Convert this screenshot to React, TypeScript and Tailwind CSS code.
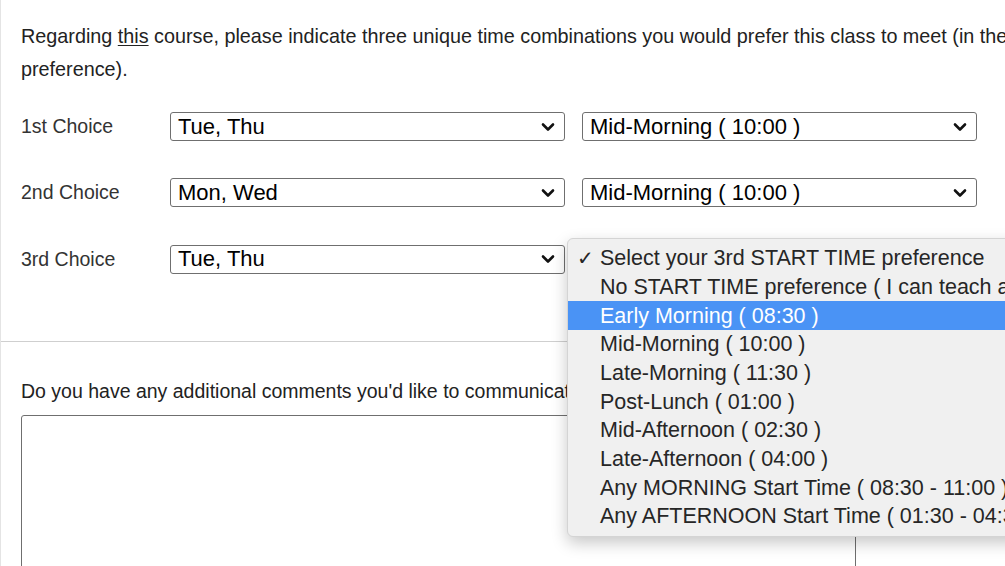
import React from "react";

const ROWS = [
  { label: "1st Choice", days: "Tue, Thu", time: "Mid-Morning ( 10:00 )" },
  { label: "2nd Choice", days: "Mon, Wed", time: "Mid-Morning ( 10:00 )" },
  { label: "3rd Choice", days: "Tue, Thu", time: "" },
];

const OPTIONS = [
  "Select your 3rd START TIME preference",
  "No START TIME preference ( I can teach any time )",
  "Early Morning ( 08:30 )",
  "Mid-Morning ( 10:00 )",
  "Late-Morning ( 11:30 )",
  "Post-Lunch ( 01:00 )",
  "Mid-Afternoon ( 02:30 )",
  "Late-Afternoon ( 04:00 )",
  "Any MORNING Start Time ( 08:30 - 11:00 )",
  "Any AFTERNOON Start Time ( 01:30 - 04:30 )",
];

function Chevron() {
  return (
    <svg viewBox="0 0 14 10" className="h-[10px] w-[14px] shrink-0">
      <path d="M2 2.5 L7 7.5 L12 2.5" fill="none" stroke="#111" strokeWidth="2.6" strokeLinecap="round" strokeLinejoin="round" />
    </svg>
  );
}

function FakeSelect({ value }: { value: string }) {
  return (
    <div className="w-[395px] h-[29px] border border-[#6f6f6f] rounded-[3px] bg-white flex items-center justify-between pl-[7px] pr-[9px]">
      <span className="text-[22px] text-black leading-none">{value}</span>
      <Chevron />
    </div>
  );
}

export default function App() {
  return (
    <div className="relative w-[1005px] h-[566px] overflow-hidden bg-white font-['Liberation_Sans',Arial,sans-serif] border-l border-[#e4e4e4]">
      <div className="w-[1200px]">
        {/* Question */}
        <div className="pl-[20px] pt-[20px] text-[19.8px] leading-[33px] text-[#222]">
          <p className="w-[1100px] whitespace-nowrap">
            Regarding <span className="underline underline-offset-2">this</span> course, please indicate three unique time combinations you would prefer this class to meet (in the order of your preference).
          </p>
          <p>preference).</p>
        </div>

        {/* Choices */}
        <div className="pl-[20px] pt-[26px] flex flex-col gap-[37px]">
          {ROWS.map((row) => (
            <div key={row.label} className="flex items-center">
              <span className="w-[149px] text-[19.5px] text-[#333]">{row.label}</span>
              <FakeSelect value={row.days} />
              {row.time && (
                <div className="ml-[17px]">
                  <FakeSelect value={row.time} />
                </div>
              )}
            </div>
          ))}
        </div>

        <div className="mt-[67px] h-px bg-[#cfcfcf] w-full" />

        {/* Comments */}
        <div className="pl-[20px] pt-[36px]">
          <p className="text-[19.5px] text-[#222] leading-[26px]">
            Do you have any additional comments you'd like to communicate?
          </p>
          <div className="mt-[11px] w-[835px] h-[200px] border border-[#6f6f6f] rounded-[3px] bg-white" />
        </div>
      </div>

      {/* Open dropdown menu */}
      <div className="absolute left-[566px] top-[238px] w-[520px] py-[5px] bg-[#f0f0f0] rounded-[6px] border border-[#d4d4d4] shadow-[0_6px_16px_rgba(0,0,0,0.22)]">
        {OPTIONS.map((opt, i) => (
          <div
            key={opt}
            className={
              "h-[28.7px] flex items-center whitespace-nowrap text-[21.5px] " +
              (i === 2 ? "bg-[#4a93f5] text-white" : "text-[#262626]")
            }
          >
            <span className="w-[32px] shrink-0 pl-[9px] text-[20px] leading-none font-['DejaVu_Sans',sans-serif]">{i === 0 ? "✓" : ""}</span>
            <span>{opt}</span>
          </div>
        ))}
      </div>
    </div>
  );
}
